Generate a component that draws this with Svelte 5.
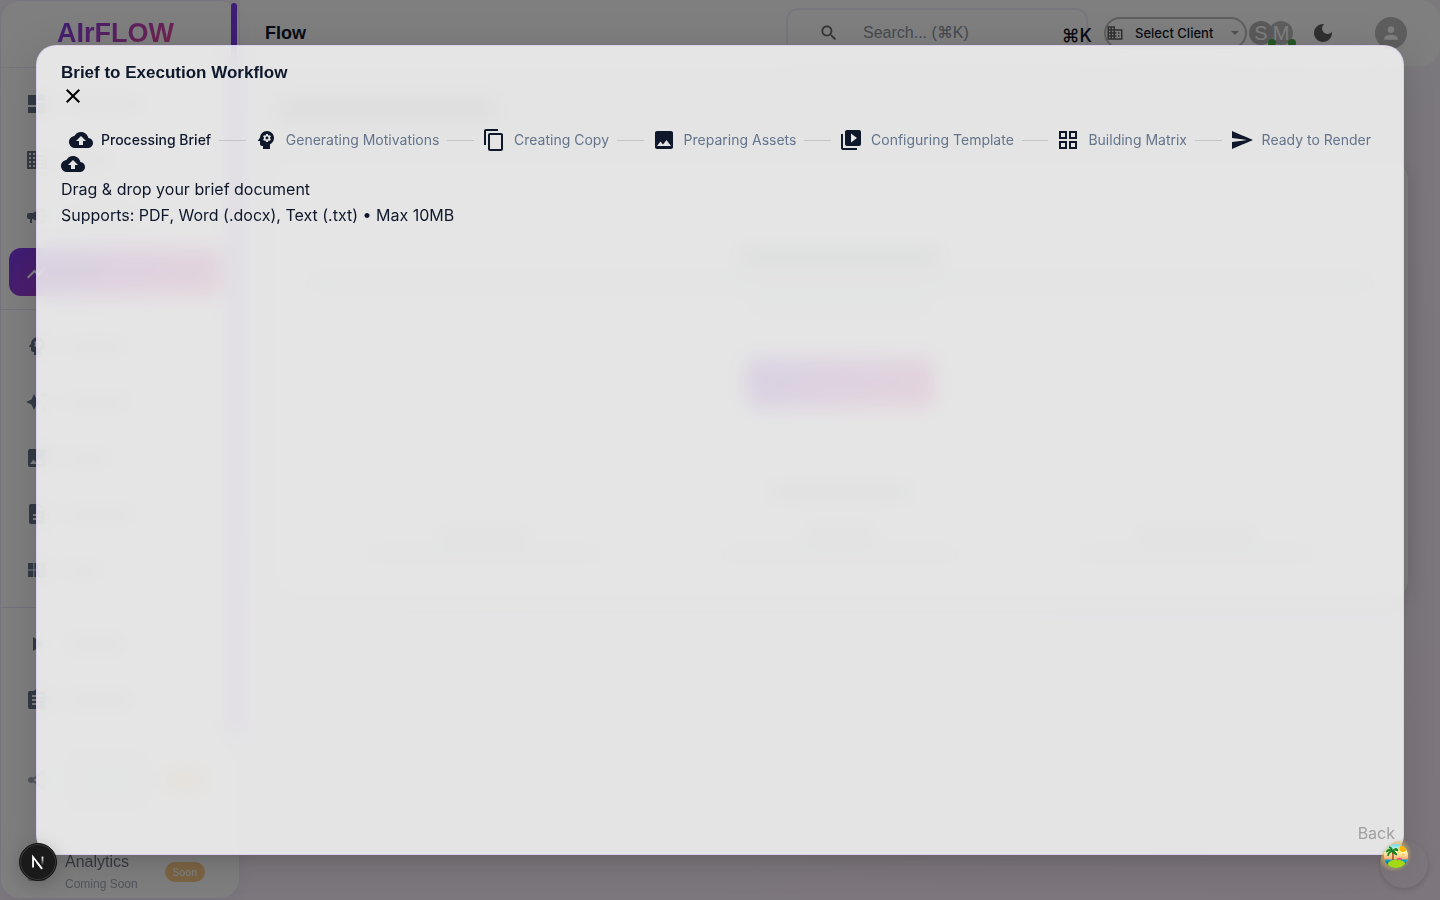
<script>
  const icons = {
    upload: 'M19.35 10.04C18.67 6.59 15.64 4 12 4 9.11 4 6.6 5.64 5.35 8.04 2.34 8.36 0 10.91 0 14c0 3.31 2.69 6 6 6h13c2.76 0 5-2.24 5-5 0-2.64-2.05-4.78-4.65-4.96zM14 13v4h-4v-4H7l5-5 5 5h-3z',
    mind: 'M13 8.57c-.79 0-1.43.64-1.43 1.43s.64 1.43 1.43 1.43 1.43-.64 1.43-1.43-.64-1.43-1.43-1.43zM13 3C9.25 3 6.2 5.94 6.02 9.64L4.1 12.2c-.25.33-.01.8.4.8H6v3c0 1.1.9 2 2 2h1v3h7v-4.68c2.36-1.12 4-3.53 4-6.32 0-3.87-3.13-7-7-7zm3 7c0 .13-.01.26-.02.39l.83.66c.08.06.1.16.05.25l-.8 1.39c-.05.09-.16.12-.24.09l-.99-.4c-.21.16-.43.29-.67.39L14 13.83c-.01.1-.1.17-.2.17h-1.6c-.1 0-.18-.07-.2-.17l-.15-1.06c-.25-.1-.47-.23-.68-.39l-.99.4c-.09.03-.2 0-.25-.09l-.8-1.39c-.05-.08-.03-.19.05-.25l.84-.66c-.01-.13-.02-.26-.02-.39s.02-.27.04-.39l-.85-.66c-.08-.06-.1-.16-.05-.26l.8-1.38c.05-.09.15-.12.24-.09l1 .4c.2-.15.43-.29.67-.39L12 6.17c.02-.1.1-.17.2-.17h1.6c.1 0 .18.07.2.17l.15 1.06c.24.1.46.23.67.39l1-.4c.09-.03.2 0 .24.09l.8 1.38c.05.09.03.2-.05.26l-.85.66c.03.12.04.25.04.39z',
    copy: 'M16 1H4c-1.1 0-2 .9-2 2v14h2V3h12V1zm3 4H8c-1.1 0-2 .9-2 2v14c0 1.1.9 2 2 2h11c1.1 0 2-.9 2-2V7c0-1.1-.9-2-2-2zm0 16H8V7h11v14z',
    image: 'M21 19V5c0-1.1-.9-2-2-2H5c-1.1 0-2 .9-2 2v14c0 1.1.9 2 2 2h14c1.1 0 2-.9 2-2zM8.5 13.5l2.5 3.01L14.5 12l4.5 6H5l3.5-4.5z',
    video: 'M4 6H2v14c0 1.1.9 2 2 2h14v-2H4V6zm16-4H8c-1.1 0-2 .9-2 2v12c0 1.1.9 2 2 2h12c1.1 0 2-.9 2-2V4c0-1.1-.9-2-2-2zm-8 12.5v-9l6 4.5-6 4.5z',
    grid: 'M3 3v8h8V3H3zm6 6H5V5h4v4zm-6 4v8h8v-8H3zm6 6H5v-4h4v4zm4-16v8h8V3h-8zm6 6h-4V5h4v4zm-6 4v8h8v-8h-8zm6 6h-4v-4h4v4z',
    send: 'M2.01 21 23 12 2.01 3 2 10l15 2-15 2z',
    close: 'M19 6.41 17.59 5 12 10.59 6.41 5 5 6.41 10.59 12 5 17.59 6.41 19 12 13.41 17.59 19 19 17.59 13.41 12z',
    search: 'M15.5 14h-.79l-.28-.27C15.41 12.59 16 11.11 16 9.5 16 5.91 13.09 3 9.5 3S3 5.91 3 9.5 5.91 16 9.5 16c1.61 0 3.09-.59 4.23-1.57l.27.28v.79l5 4.99L20.49 19l-4.99-5zm-6 0C7.01 14 5 11.99 5 9.5S7.01 5 9.5 5 14 7.01 14 9.5 11.99 14 9.5 14z',
    moon: 'M12 3c-4.97 0-9 4.03-9 9s4.03 9 9 9 9-4.03 9-9c0-.46-.04-.92-.1-1.36-.98 1.37-2.58 2.26-4.4 2.26-2.98 0-5.4-2.42-5.4-5.4 0-1.81.89-3.42 2.26-4.4-.44-.06-.9-.1-1.36-.1z',
    business: 'M12 7V3H2v18h20V7H12zM6 19H4v-2h2v2zm0-4H4v-2h2v2zm0-4H4V9h2v2zm0-4H4V5h2v2zm4 12H8v-2h2v2zm0-4H8v-2h2v2zm0-4H8V9h2v2zm0-4H8V5h2v2zm10 12h-8v-2h2v-2h-2v-2h2v-2h-2V9h8v10zm-2-8h-2v2h2v-2zm0 4h-2v2h2v-2z',
    person: 'M12 12c2.21 0 4-1.79 4-4s-1.79-4-4-4-4 1.79-4 4 1.79 4 4 4zm0 2c-2.67 0-8 1.34-8 4v2h16v-2c0-2.66-5.33-4-8-4z',
    dashboard: 'M3 13h8V3H3v10zm0 8h8v-6H3v6zm10 0h8V11h-8v10zm0-18v6h8V3h-8z',
    campaign: 'M18 11v2h4v-2h-4zm-2 6.61c.96.71 2.21 1.65 3.2 2.39.4-.53.8-1.07 1.2-1.6-.99-.74-2.24-1.68-3.2-2.4-.4.54-.8 1.08-1.2 1.61zM20.4 5.6c-.4-.53-.8-1.07-1.2-1.6-.99.74-2.24 1.68-3.2 2.4.4.53.8 1.07 1.2 1.6.96-.72 2.21-1.65 3.2-2.4zM4 9c-1.1 0-2 .9-2 2v2c0 1.1.9 2 2 2h1v4h2v-4h1l5 3V6L8 9H4z',
    chart: 'M3.5 18.49l6-6.01 4 4L22 6.92l-1.41-1.41-7.09 7.97-4-4L2 16.99z',
    sparkle: 'M19 9l1.25-2.75L23 5l-2.75-1.25L19 1l-1.25 2.75L15 5l2.75 1.25L19 9zm-7.5.5L9 4 6.5 9.5 1 12l5.5 2.5L9 20l2.5-5.5L17 12l-5.5-2.5zM19 15l-1.25 2.75L15 19l2.75 1.25L19 23l1.25-2.75L23 19l-2.75-1.25L19 15z',
    doc: 'M14 2H6c-1.1 0-1.99.9-1.99 2L4 20c0 1.1.89 2 1.99 2H18c1.1 0 2-.9 2-2V8l-6-6zm2 16H8v-2h8v2zm0-4H8v-2h8v2zm-3-5V3.5L18.5 9H13z',
    module: 'M14.67 5v6.5H9.33V5h5.34zm1 6.5H21V5h-5.33v6.5zm-1 7.5v-6.5H9.33V19h5.34zm1-6.5V19H21v-6.5h-5.33zm-7.34 0H3V19h5.33v-6.5zm0-1V5H3v6.5h5.33z',
    play: 'M8 5v14l11-7z',
    assignment: 'M19 3h-4.18C14.4 1.84 13.3 1 12 1c-1.3 0-2.4.84-2.82 2H5c-1.1 0-2 .9-2 2v14c0 1.1.9 2 2 2h14c1.1 0 2-.9 2-2V5c0-1.1-.9-2-2-2zm-7 0c.55 0 1 .45 1 1s-.45 1-1 1-1-.45-1-1 .45-1 1-1zm2 14H7v-2h7v2zm3-4H7v-2h10v2zm0-4H7V7h10v2z',
    share: 'M18 16.08c-.76 0-1.44.3-1.96.77L8.91 12.7c.05-.23.09-.46.09-.7s-.04-.47-.09-.7l7.05-4.11c.54.5 1.25.81 2.04.81 1.66 0 3-1.34 3-3s-1.34-3-3-3-3 1.34-3 3c0 .24.04.47.09.7L8.04 9.81C7.5 9.31 6.79 9 6 9c-1.66 0-3 1.34-3 3s1.34 3 3 3c.79 0 1.5-.31 2.04-.81l7.12 4.16c-.05.21-.08.43-.08.65 0 1.61 1.31 2.92 2.92 2.92s2.92-1.31 2.92-2.92-1.31-2.92-2.92-2.92z',
    analytics: 'M19 3H5c-1.1 0-2 .9-2 2v14c0 1.1.9 2 2 2h14c1.1 0 2-.9 2-2V5c0-1.1-.9-2-2-2zM9 17H7v-5h2v5zm4 0h-2v-3h2v3zm0-5h-2v-2h2v2zm4 5h-2V7h2v10z'
  };

  const groups = [
    [['dashboard', 78], ['business', 48], ['campaign', 72], ['chart', 40]],
    [['mind', 60], ['sparkle', 64], ['image', 46], ['doc', 68], ['module', 38]],
    [['play', 60], ['assignment', 68]]
  ];

  const steps = [
    ['upload', 'Processing Brief'],
    ['mind', 'Generating Motivations'],
    ['copy', 'Creating Copy'],
    ['image', 'Preparing Assets'],
    ['video', 'Configuring Template'],
    ['grid', 'Building Matrix'],
    ['send', 'Ready to Render']
  ];
</script>

{#snippet icon(name)}
  <svg class="icon" viewBox="0 0 24 24" aria-hidden="true"><path d={icons[name]} /></svg>
{/snippet}

<div class="page">
  <aside class="sidebar">
    <div class="brand"><span>AIrFLOW</span></div>
    <nav>
      {#each groups as group, g}
        {#if g > 0}<hr />{/if}
        <ul>
          {#each group as [name, width]}
            <li class:active={name === 'chart'}>
              {@render icon(name)}
              <i class="line" style="width: {width}px"></i>
            </li>
          {/each}
        </ul>
      {/each}
      <ul class="soon-list">
        <li class="tall">
          {@render icon('share')}
          <div class="label lines"><i class="line"></i><i class="line"></i><i class="line"></i></div>
          <i class="badge"></i>
        </li>
        <li>
          {@render icon('analytics')}
          <div class="label">Analytics<small>Coming Soon</small></div>
          <span class="badge">Soon</span>
        </li>
      </ul>
    </nav>
    <div class="thumb"></div>
  </aside>

  <div class="column">
    <header>
      <h1>Flow</h1>
      <div class="tools">
        <label class="search">
          {@render icon('search')}
          <input type="text" aria-label="Search" placeholder="Search... (⌘K)" />
          <kbd>⌘K</kbd>
        </label>
        <button class="client" type="button">
          {@render icon('business')}
          <span>Select Client</span>
          <svg class="caret" viewBox="0 0 8 4" aria-hidden="true"><path d="M0 0h8L4 4z" /></svg>
        </button>
        <div class="people">
          <span class="avatar">S</span>
          <span class="avatar">M</span>
        </div>
        <button class="theme" type="button" aria-label="Dark mode">{@render icon('moon')}</button>
        <button class="account" type="button" aria-label="Account">{@render icon('person')}</button>
      </div>
    </header>

    <main aria-hidden="true">
      <i class="line title"></i>
      <section>
        <i class="line heading"></i>
        <i class="line wide"></i>
        <i class="line short"></i>
        <div class="cta"></div>
        <i class="line sub"></i>
        <div class="features">
          {#each [90, 70, 120] as width}
            <div><i class="line" style="width: {width}px"></i><i class="line faint"></i></div>
          {/each}
        </div>
      </section>
    </main>
  </div>
</div>

<div class="scrim">
  <div class="dialog" role="dialog" aria-modal="true" aria-labelledby="workflow-title">
    <div class="dialog-head">
      <h2 id="workflow-title">Brief to Execution Workflow</h2>
      <button class="close" type="button" aria-label="Close">{@render icon('close')}</button>
    </div>
    <div class="dialog-body">
      <ol class="stepper">
        {#each steps as [name, label], i}
          {#if i > 0}<li class="connector" aria-hidden="true"></li>{/if}
          <li class="step" class:current={i === 0}>
            {@render icon(name)}
            <span>{label}</span>
          </li>
        {/each}
      </ol>
      <div class="drop">
        {@render icon('upload')}
        <p>Drag &amp; drop your brief document</p>
        <p>Supports: PDF, Word (.docx), Text (.txt) • Max 10MB</p>
      </div>
    </div>
    <div class="dialog-actions"><button type="button" disabled>Back</button></div>
  </div>
</div>

<button class="island" type="button" aria-label="Query tools">
  <svg viewBox="0 0 24 24" aria-hidden="true">
    <defs>
      <linearGradient id="sky" x1="0" y1="0" x2="0" y2="1">
        <stop offset="0" stop-color="#6bdaff" />
        <stop offset=".32" stop-color="#f9ffb5" />
        <stop offset=".65" stop-color="#ffa770" />
        <stop offset="1" stop-color="#ff7373" />
      </linearGradient>
      <clipPath id="round"><circle cx="12" cy="12" r="12" /></clipPath>
    </defs>
    <g clip-path="url(#round)">
      <rect width="24" height="24" fill="url(#sky)" />
      <circle cx="19" cy="4.5" r="3.6" fill="#ffb400" />
      <path d="M14.5 5l-2-.5M15.500 8l-1.700 1M19 9.500v2" stroke="#ffb400" stroke-width=".8" />
      <rect y="15.500" width="24" height="9" fill="#0aa4c9" />
      <path d="M0 18q3-1.500 6 0t6 0 6 0 6 0v6H0z" fill="#067ea5" />
      <ellipse cx="12.500" cy="21" rx="9" ry="5.500" fill="#a6d815" />
      <path d="M13 16q2-2 5-.5" stroke="#e9467c" stroke-width="1.500" fill="none" />
      <path d="M8 7q1.800 4 .8 9" stroke="#9a4a1c" stroke-width="1.400" fill="none" />
      <path d="M8 7Q4 3 2 8q3-2 6-1Q3 8 4 12q1-3 4-5 1 3 5 4-1-4-5-4 3-2 6 0-1-5-6 0 1-4-3-4 1 1 3 4z" fill="#168021" stroke="#168021" stroke-width="1" />
    </g>
  </svg>
</button>

<button class="dev" type="button" aria-label="Developer tools">
  <svg viewBox="0 0 40 40" aria-hidden="true">
    <defs>
      <linearGradient id="slash" x1="19" y1="22" x2="25" y2="30" gradientUnits="userSpaceOnUse">
        <stop stop-color="#fff" />
        <stop offset="1" stop-color="#fff" stop-opacity="0" />
      </linearGradient>
      <linearGradient id="stem" x1="25" y1="14" x2="25" y2="24" gradientUnits="userSpaceOnUse">
        <stop stop-color="#fff" />
        <stop offset="1" stop-color="#fff" stop-opacity="0" />
      </linearGradient>
    </defs>
    <path d="M14.500 26V14.500L24.500 27.500" fill="none" stroke="#fff" stroke-width="2" />
    <path d="M19 20.500L25 28.500" stroke="url(#slash)" stroke-width="2" />
    <rect x="24" y="14" width="2" height="11" fill="url(#stem)" />
  </svg>
</button>

<style>
  :global(body) {
    margin: 0;
    overflow: hidden;
  }
  * {
    box-sizing: border-box;
  }
  button {
    padding: 0;
    border: 0;
    background: none;
    font: inherit;
  }
  ul, ol {
    margin: 0;
    padding: 0;
    list-style: none;
  }
  .icon {
    display: block;
    flex: none;
    width: 24px;
    height: 24px;
    fill: currentColor;
  }
  .page {
    isolation: isolate;
    display: flex;
    height: 100vh;
    overflow: hidden;
    background: linear-gradient(160deg, #f8f4fc, #fbeffb);
    font-family: "Liberation Sans", Arial, sans-serif;
    color: #0f172a;
  }
  .sidebar {
    position: relative;
    flex: none;
    width: 240px;
    height: calc(100vh - 1px);
    border: 1px solid #efe8fa;
    border-radius: 20px;
    background: #fff;
    box-shadow: 0 4px 16px rgba(124, 58, 237, .08);
  }
  .brand {
    display: flex;
    align-items: center;
    justify-content: center;
    height: 67px;
    padding: 0 9px 2px 0;
    border-bottom: 1px solid #f0eafa;
    font-size: 27px;
    font-weight: 700;
  }
  .brand span {
    background: linear-gradient(135deg, #7c3aed, #ec4899);
    background-clip: text;
    color: transparent;
  }
  nav {
    padding: 12px 18px 0 0;
  }
  nav hr {
    height: 1px;
    margin: 13px -18px 12px 0;
    border: 0;
    background: #ece4f8;
  }
  nav ul {
    display: flex;
    flex-direction: column;
    gap: 8px;
    padding-left: 8px;
  }
  nav li {
    display: flex;
    align-items: center;
    gap: 16px;
    height: 48px;
    padding: 0 16px;
    border-radius: 12px;
    color: #64748b;
  }
  nav li.active {
    background: linear-gradient(135deg, #7c3aed, #ec4899);
    color: #fff;
  }
  .line {
    display: block;
    height: 8px;
    border-radius: 4px;
    background: #475569;
    opacity: .4;
  }
  nav ul.soon-list {
    margin-top: 8px;
  }
  .soon-list li {
    height: 72px;
    opacity: .6;
  }
  .soon-list li.tall {
    height: 96px;
  }
  .label {
    flex: 1;
    font-size: 16px;
    line-height: 24px;
    color: #0f172a;
  }
  .label small {
    display: block;
    font-size: 12px;
    line-height: 20px;
    color: #64748b;
  }
  .lines {
    display: grid;
    gap: 12px;
  }
  .badge {
    width: 40px;
    height: 20px;
    border-radius: 10px;
    background: #f5a83a;
    color: #fff;
    font: 500 10px/20px Inter, sans-serif;
    text-align: center;
  }
  .thumb {
    position: absolute;
    top: 2px;
    right: 2px;
    width: 6px;
    height: 735px;
    border-radius: 3px;
    background: #7c3aed;
  }
  .column {
    flex: 1;
    min-width: 0;
  }
  header {
    display: flex;
    align-items: center;
    justify-content: space-between;
    height: 66px;
    padding: 0 33px 0 25px;
    border-radius: 0 20px 20px 0;
    background: #fff;
  }
  h1, h2 {
    margin: 0;
    font-size: 17px;
    line-height: 22px;
  }
  h1 {
    font-size: 18px;
  }
  .tools {
    display: flex;
    align-items: center;
  }
  .search {
    display: flex;
    align-items: center;
    width: 302px;
    height: 50px;
    margin-right: 16px;
    padding-left: 31px;
    border: 2px solid #f1ecfa;
    border-radius: 12px;
    color: #666;
  }
  .search .icon {
    width: 20px;
    height: 20px;
  }
  .search input {
    flex: 1;
    width: 0;
    margin-left: 24px;
    padding: 0;
    border: 0;
    background: none;
    font: 16px "Liberation Sans", Arial, sans-serif;
  }
  .search input::placeholder {
    color: #8b93a1;
  }
  .search kbd {
    margin: 4px -6px 0 0;
    font: 500 18px Inter, sans-serif;
    color: #0f172a;
  }
  .client {
    display: flex;
    align-items: center;
    width: 143px;
    height: 32px;
    padding: 0 6px 0 0;
    border: 2px solid #bdbdbd;
    border-radius: 16px;
    color: #616161;
  }
  .client .icon {
    width: 18px;
    height: 18px;
  }
  .client span {
    flex: 1;
    margin-left: 11px;
    color: #0f172a;
    font: 500 13px Inter, sans-serif;
    text-align: left;
  }
  .caret {
    width: 8px;
    height: 4px;
    fill: #a0a3ad;
  }
  .people {
    display: flex;
    margin-left: 2px;
  }
  .avatar {
    position: relative;
    width: 24px;
    height: 24px;
    border-radius: 50%;
    background: #bdbdbd;
    color: #fff;
    font: 20px/24px "Liberation Sans", Arial, sans-serif;
    text-align: center;
  }
  .avatar + .avatar {
    margin-left: -4px;
  }
  .avatar::after {
    content: "";
    position: absolute;
    right: -3px;
    bottom: -2px;
    width: 8px;
    height: 8px;
    border-radius: 50%;
    background: #4caf50;
  }
  .avatar:first-child {
    z-index: 1;
    background: #b4b4b4;
  }
  .theme {
    margin-left: 18px;
    color: #616161;
  }
  .account {
    display: grid;
    place-items: center;
    width: 32px;
    height: 32px;
    margin-left: 40px;
    border-radius: 50%;
    background: #bdbdbd;
    color: #fff;
  }
  .account .icon {
    width: 20px;
    height: 20px;
  }
  main {
    padding: 34px 32px 0;
  }
  .line.title {
    width: 215px;
    height: 20px;
    margin-left: 8px;
    opacity: .5;
  }
  section {
    display: flex;
    flex-direction: column;
    align-items: center;
    height: 440px;
    margin-top: 40px;
    padding-top: 88px;
    border-radius: 20px;
    background: #fff;
    box-shadow: 0 4px 20px rgba(15, 23, 42, .12);
  }
  .line.heading {
    width: 200px;
    height: 16px;
    opacity: .5;
  }
  .line.wide {
    width: 94%;
    margin-top: 14px;
    opacity: .3;
  }
  .line.short {
    width: 184px;
    margin-top: 16px;
    opacity: .3;
  }
  .cta {
    width: 190px;
    height: 50px;
    margin-top: 48px;
    border-radius: 12px;
    background: linear-gradient(135deg, #7c3aed, #ec4899);
  }
  .line.sub {
    width: 140px;
    height: 12px;
    margin-top: 78px;
  }
  .features {
    display: grid;
    grid-template-columns: repeat(3, 1fr);
    width: 94%;
    margin-top: 32px;
  }
  .features div {
    display: grid;
    justify-items: center;
    gap: 12px;
  }
  .line.faint {
    width: 240px;
    opacity: .25;
  }
  .scrim {
    position: fixed;
    inset: 0;
    display: grid;
    place-items: center;
    background: rgba(0, 0, 0, .5);
  }
  .dialog {
    display: flex;
    flex-direction: column;
    width: 95%;
    height: 90vh;
    border: 1px solid rgba(216, 204, 240, .8);
    border-radius: 20px;
    background: rgba(255, 255, 255, .8);
    backdrop-filter: blur(10px);
    box-shadow: 0 11px 15px -7px rgba(0, 0, 0, .1), 0 9px 40px 4px rgba(0, 0, 0, .12);
    color: #0f172a;
    font: 16px/26px Inter, sans-serif;
  }
  .dialog-head {
    padding: 16px 24px;
  }
  .dialog-head h2 {
    font-family: "Liberation Sans", Arial, sans-serif;
  }
  .close {
    display: block;
    color: #000;
  }
  .dialog-body {
    flex: 1;
    padding: 4px 24px 0;
  }
  .stepper {
    display: flex;
    align-items: center;
  }
  .step {
    display: flex;
    align-items: center;
    gap: 8px;
    padding: 0 8px;
    font-size: 14px;
    line-height: 24px;
    white-space: nowrap;
  }
  .step span {
    color: #64748b;
  }
  .step.current span {
    color: #0f172a;
    font-weight: 500;
  }
  .connector {
    flex: 1;
    height: 1px;
    background: #c4c4c4;
  }
  p {
    margin: 0;
  }
  .dialog-actions {
    display: flex;
    justify-content: flex-end;
    padding: 8px;
  }
  .dialog-actions button {
    color: #a0a0a0;
  }
  .island {
    position: fixed;
    right: 12px;
    bottom: 12px;
    display: flex;
    align-items: flex-start;
    width: 48px;
    height: 48px;
    padding: 4px;
    border-radius: 50%;
    background: radial-gradient(circle at 14px 14px, rgba(222, 180, 90, .6) 12px, rgba(222, 180, 90, 0) 18px);
    box-shadow: 0 2px 5px rgba(0, 0, 0, .15);
  }
  .island svg {
    display: block;
    width: 24px;
    height: 24px;
  }
  .dev {
    position: fixed;
    left: 19px;
    bottom: 19px;
    width: 38px;
    height: 38px;
    border: 1px solid #111;
    border-radius: 50%;
    background: #1a1a1a;
    box-shadow: inset 0 0 0 1px #3c3c3c, 0 4px 20px rgba(0, 0, 0, .2);
  }
  .dev svg {
    display: block;
    width: 100%;
  }
</style>
